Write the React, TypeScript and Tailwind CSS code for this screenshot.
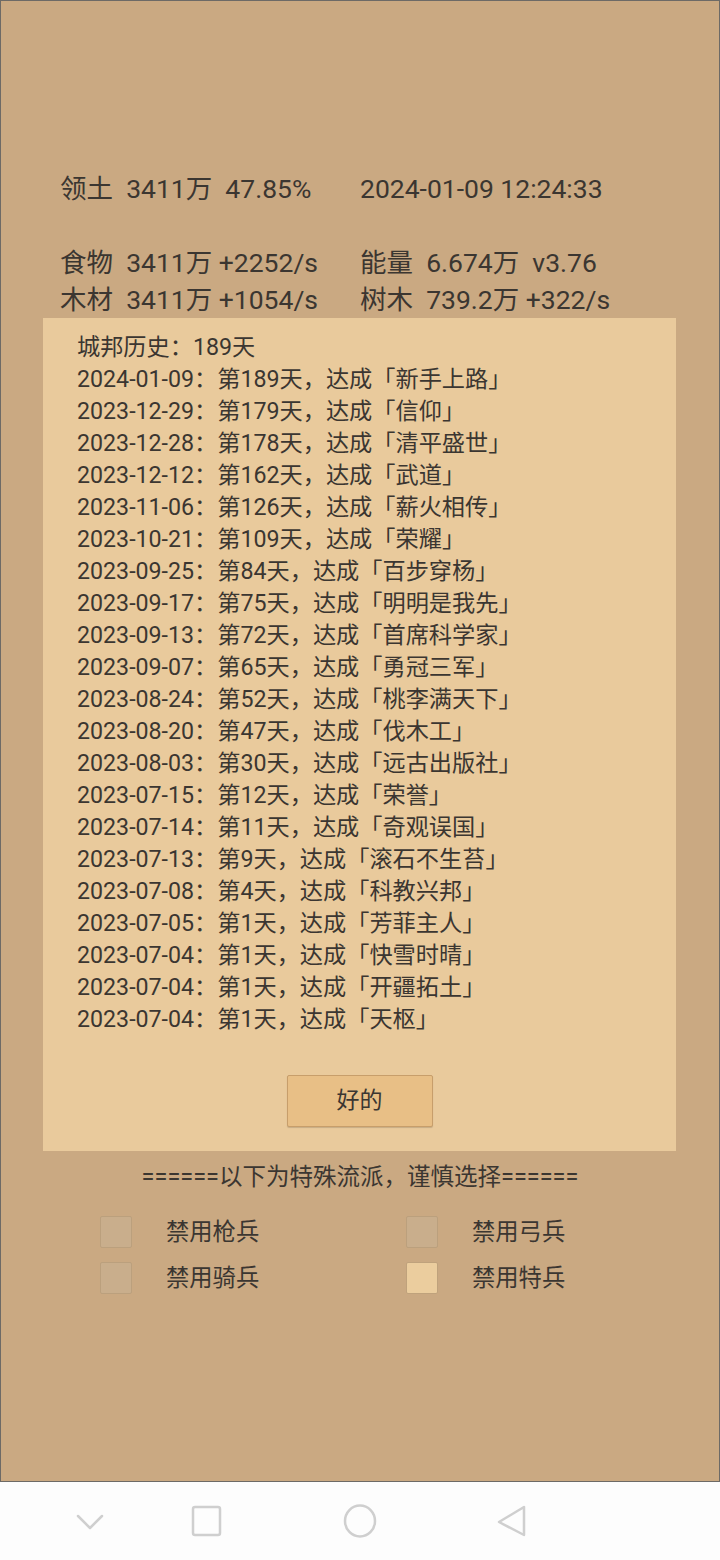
import React, { useState } from 'react';

const history: [string, number, string][] = [
  ['2024-01-09', 189, '新手上路'],
  ['2023-12-29', 179, '信仰'],
  ['2023-12-28', 178, '清平盛世'],
  ['2023-12-12', 162, '武道'],
  ['2023-11-06', 126, '薪火相传'],
  ['2023-10-21', 109, '荣耀'],
  ['2023-09-25', 84, '百步穿杨'],
  ['2023-09-17', 75, '明明是我先'],
  ['2023-09-13', 72, '首席科学家'],
  ['2023-09-07', 65, '勇冠三军'],
  ['2023-08-24', 52, '桃李满天下'],
  ['2023-08-20', 47, '伐木工'],
  ['2023-08-03', 30, '远古出版社'],
  ['2023-07-15', 12, '荣誉'],
  ['2023-07-14', 11, '奇观误国'],
  ['2023-07-13', 9, '滚石不生苔'],
  ['2023-07-08', 4, '科教兴邦'],
  ['2023-07-05', 1, '芳菲主人'],
  ['2023-07-04', 1, '快雪时晴'],
  ['2023-07-04', 1, '开疆拓土'],
  ['2023-07-04', 1, '天枢'],
];

const bans = ['禁用枪兵', '禁用弓兵', '禁用骑兵', '禁用特兵'];

export default function App() {
  const [checked, setChecked] = useState<boolean[]>([false, false, false, true]);

  return (
    <div
      className="w-[720px] h-[1560px] flex flex-col bg-[#fdfdfd] text-[#3b3631]"
      style={{ fontFamily: 'Roboto, "Noto Sans CJK SC", sans-serif' }}
    >
      <div className="h-[1482px] bg-[#caa982] border border-[#6d6a66] flex flex-col">
        {/* stats */}
        <div className="pt-[169px] pl-[59px] text-[26.5px] leading-[37px] grid grid-cols-[300px_1fr] whitespace-pre">
          <div>领土  3411万  47.85%</div>
          <div>2024-01-09 12:24:33</div>
          <div className="h-[37px]"></div>
          <div></div>
          <div>食物  3411万 +2252/s</div>
          <div>能量  6.674万  v3.76</div>
          <div>木材  3411万 +1054/s</div>
          <div>树木  739.2万 +322/s</div>
        </div>

        {/* history panel */}
        <div className="ml-[42px] mr-[43px] bg-[#e9ca9c] pt-[13px] pb-[24px] pl-[34px] text-[23.2px] leading-[32px]">
          <div>城邦历史：189天</div>
          {history.map(([date, day, name], i) => (
            <div key={i}>
              {date}：第{day}天，达成「{name}」
            </div>
          ))}
          <div className="flex justify-center mt-[40px] -ml-[34px]">
            <button className="w-[146px] h-[52px] bg-[#e8bf86] border border-[#c79e6b] rounded-[2px] shadow-[0_1px_1px_rgba(0,0,0,0.15)] text-[23px]">
              好的
            </button>
          </div>
        </div>

        <div className="mt-[10px] text-center text-[23.5px] leading-[32px]">
          ======以下为特殊流派，谨慎选择======
        </div>

        <div className="mt-[23px] pl-[99px] grid grid-cols-[306px_1fr] gap-y-[14px]">
          {bans.map((b, i) => (
            <label key={b} className="flex items-center cursor-pointer" onClick={() => setChecked(c => c.map((v, j) => (j === i ? !v : v)))}>
              <span
                className={
                  'w-[32px] h-[32px] rounded-[2px] border ' +
                  (checked[i] ? 'bg-[#ebcd9e] border-[#bfa27c]' : 'bg-[#c9ae8c] border-[#bba07d]')
                }
              ></span>
              <span className="ml-[34px] text-[23.3px] leading-[32px]">{b}</span>
            </label>
          ))}
        </div>
      </div>

      {/* nav bar */}
      <div className="flex-1 relative">
        <svg width="720" height="78" viewBox="0 0 720 78" fill="none" stroke="#cfcfcf" strokeWidth="2.5">
          <polyline points="78,34 90,46 102,34" strokeLinecap="round" strokeLinejoin="round" />
          <rect x="193" y="25" width="27" height="28" rx="2" />
          <ellipse cx="360" cy="39" rx="15" ry="15.5" />
          <path d="M524 25 L524 53 L499 40 Z" strokeLinejoin="round" />
        </svg>
      </div>
    </div>
  );
}
